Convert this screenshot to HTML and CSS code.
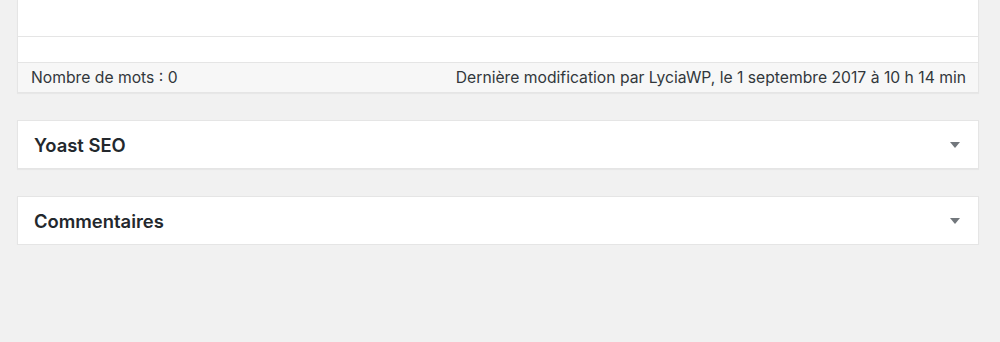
FILE: index.html
```html
<!DOCTYPE html>
<html lang="fr">
<head>
<meta charset="utf-8">
<title>Modifier l’article</title>
<link rel="stylesheet" href="styles.css">
</head>
<body>
<div class="wrap">
  <div class="editor">
    <div class="editor-area"></div>
    <div class="editor-bottom"></div>
    <div class="status">
      <span>Nombre de mots : 0</span>
      <span>Dernière modification par LyciaWP, le 1 septembre 2017 à 10 h 14 min</span>
    </div>
  </div>
  <div class="postbox">
    <h2 class="hndle">Yoast SEO</h2>
    <span class="toggle"></span>
  </div>
  <div class="postbox">
    <h2 class="hndle">Commentaires</h2>
    <span class="toggle"></span>
  </div>
</div>
</body>
</html>
```
FILE: styles.css
```css
html, body {
  margin: 0;
  padding: 0;
  background: #f1f1f1;
  font-family: Inter, "Liberation Sans", Arial, sans-serif;
  color: #444;
}
.wrap {
  padding: 0 21px 0 17px;
  display: flex;
  flex-direction: column;
  gap: 27px;
}
.editor {
  background: #fff;
  border: 1px solid #e5e5e5;
  border-top: none;
  box-shadow: 0 1px 1px rgba(0,0,0,.04);
}
.editor-area {
  height: 36px;
  border-bottom: 1px solid #e5e5e5;
}
.editor-bottom {
  height: 25px;
}
.status {
  height: 29px;
  border-top: 1px solid #e5e5e5;
  background: #f7f7f7;
  display: flex;
  justify-content: space-between;
  align-items: center;
  padding: 0 12px 0 13px;
  font-size: 15.7px;
  color: #32373c;
}
.postbox {
  background: #fff;
  border: 1px solid #e5e5e5;
  box-shadow: 0 1px 1px rgba(0,0,0,.04);
  height: 47px;
  display: flex;
  align-items: center;
  justify-content: space-between;
  padding: 0 18px 0 16px;
}
.hndle {
  margin: 0;
  font-size: 18.4px;
  font-weight: 600;
  color: #23282d;
}
.toggle {
  width: 0;
  height: 0;
  border-left: 5px solid transparent;
  border-right: 5px solid transparent;
  border-top: 6px solid #72777c;
  margin-top: 1px;
}
```
